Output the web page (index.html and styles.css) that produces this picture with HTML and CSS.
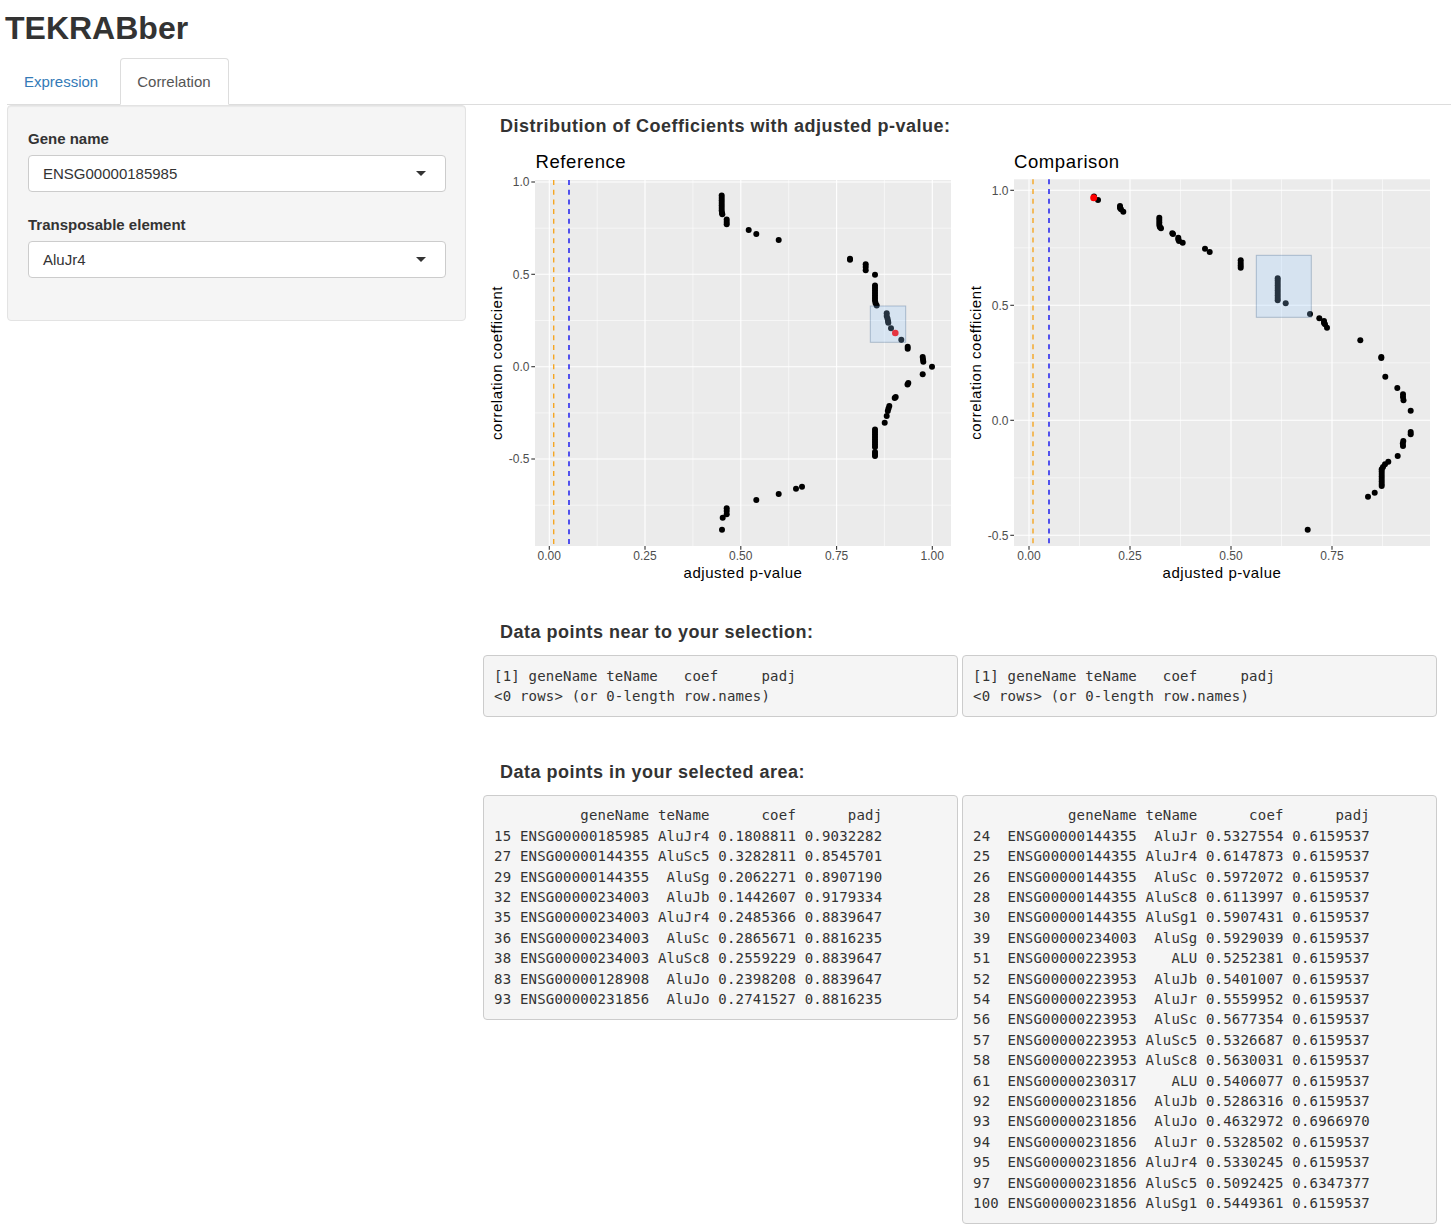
FILE: index.html
```html
<!DOCTYPE html>
<html>
<head>
<meta charset="utf-8">
<title>TEKRABber</title>
<link rel="stylesheet" href="styles.css">
</head>
<body>
<div class="app">
  <h2 class="app-title">TEKRABber</h2>
  <ul class="tabs">
    <li class="tab"><a>Expression</a></li>
    <li class="tab active"><a>Correlation</a></li>
  </ul>
  <div class="layout">
    <aside class="sidebar">
      <div class="well">
        <div class="form-group">
          <label class="control-label">Gene name</label>
          <div class="select"><span>ENSG00000185985</span><i class="caret"></i></div>
        </div>
        <div class="form-group">
          <label class="control-label">Transposable element</label>
          <div class="select"><span>AluJr4</span><i class="caret"></i></div>
        </div>
      </div>
    </aside>
    <main class="main">
      <h4 class="section-title first">Distribution of Coefficients with adjusted p-value:</h4>
      <div class="pair">
        <svg class="plot" width="475" height="445" viewBox="483 145 475 445" xmlns="http://www.w3.org/2000/svg">
          <rect x="535" y="179" width="416" height="366" fill="#EBEBEB"/>
          <g stroke="#FFFFFF" stroke-width="0.55">
            <line x1="597.2" y1="179" x2="597.2" y2="545"/><line x1="692.9" y1="179" x2="692.9" y2="545"/>
            <line x1="788.7" y1="179" x2="788.7" y2="545"/><line x1="884.4" y1="179" x2="884.4" y2="545"/>
            <line x1="535" y1="227.2" x2="951" y2="227.2"/><line x1="535" y1="319.5" x2="951" y2="319.5"/>
            <line x1="535" y1="411.9" x2="951" y2="411.9"/><line x1="535" y1="504.2" x2="951" y2="504.2"/>
          </g>
          <g stroke="#FFFFFF" stroke-width="1.1">
            <line x1="549.3" y1="179" x2="549.3" y2="545"/><line x1="645" y1="179" x2="645" y2="545"/>
            <line x1="740.8" y1="179" x2="740.8" y2="545"/><line x1="836.6" y1="179" x2="836.6" y2="545"/>
            <line x1="932.3" y1="179" x2="932.3" y2="545"/>
            <line x1="535" y1="181" x2="951" y2="181"/><line x1="535" y1="273.3" x2="951" y2="273.3"/>
            <line x1="535" y1="365.7" x2="951" y2="365.7"/><line x1="535" y1="458" x2="951" y2="458"/>
          </g>
          <line x1="553.7" y1="179" x2="553.7" y2="545" stroke="#F5A623" stroke-width="1.4" stroke-dasharray="5 4.7"/>
          <line x1="569" y1="179" x2="569" y2="545" stroke="#1010F0" stroke-width="1.4" stroke-dasharray="5 4.7"/>
          <g fill="#000000">
            <circle cx="721.7" cy="194.5" r="3"/><circle cx="721.7" cy="197" r="3"/><circle cx="721.7" cy="199.5" r="3"/>
            <circle cx="721.7" cy="202" r="3"/><circle cx="721.7" cy="204.5" r="3"/><circle cx="721.7" cy="207" r="3"/>
            <circle cx="721.7" cy="209.5" r="3"/><circle cx="722" cy="212" r="3"/><circle cx="722.3" cy="213.3" r="3"/>
            <circle cx="726.7" cy="218.5" r="3"/><circle cx="726.7" cy="221" r="3"/><circle cx="726.7" cy="223.3" r="3"/>
            <circle cx="748.7" cy="229" r="3"/><circle cx="756.3" cy="233" r="3"/><circle cx="778.7" cy="239" r="3"/>
            <circle cx="850" cy="257.7" r="3"/><circle cx="850" cy="258.7" r="3"/>
            <circle cx="865.7" cy="263.3" r="3"/><circle cx="865.7" cy="266" r="3"/><circle cx="865.7" cy="269.3" r="3"/>
            <circle cx="875" cy="273.7" r="3"/>
            <circle cx="875" cy="284.5" r="3"/><circle cx="875" cy="287" r="3"/><circle cx="875" cy="289.5" r="3"/>
            <circle cx="875" cy="292" r="3"/><circle cx="875" cy="294.5" r="3"/><circle cx="875" cy="297" r="3"/>
            <circle cx="875" cy="299.5" r="3"/><circle cx="875.5" cy="302" r="3"/><circle cx="876.7" cy="304.5" r="3"/>
            <circle cx="886.7" cy="312.3" r="3"/><circle cx="886.7" cy="315" r="3"/><circle cx="887.5" cy="317.5" r="3"/>
            <circle cx="888" cy="320" r="3"/><circle cx="888.3" cy="321.7" r="3"/><circle cx="891" cy="327.3" r="3"/>
            <circle cx="901.3" cy="338.7" r="3"/>
            <circle cx="907.7" cy="345.7" r="3"/><circle cx="907.7" cy="347.7" r="3"/>
            <circle cx="922.7" cy="356" r="3"/><circle cx="923" cy="358.5" r="3"/><circle cx="923.3" cy="360.7" r="3"/>
            <circle cx="932" cy="365.7" r="3"/><circle cx="922.7" cy="373.3" r="3"/>
            <circle cx="908.3" cy="382" r="3"/><circle cx="907.5" cy="383.5" r="3"/>
            <circle cx="895.7" cy="396" r="3"/><circle cx="894.7" cy="397" r="3"/>
            <circle cx="889.3" cy="405" r="3"/><circle cx="888.5" cy="407.5" r="3"/><circle cx="887.8" cy="410" r="3"/>
            <circle cx="886.7" cy="415" r="3"/><circle cx="884.7" cy="421.7" r="3"/>
            <circle cx="875" cy="428.5" r="3"/><circle cx="875" cy="431" r="3"/><circle cx="875" cy="433.5" r="3"/>
            <circle cx="875" cy="436" r="3"/><circle cx="875" cy="438.5" r="3"/><circle cx="875" cy="441" r="3"/>
            <circle cx="875" cy="443.5" r="3"/><circle cx="875" cy="446" r="3"/><circle cx="875" cy="451" r="3"/>
            <circle cx="875" cy="453" r="3"/><circle cx="875" cy="455" r="3"/>
            <circle cx="802" cy="485.7" r="3"/><circle cx="796" cy="487.7" r="3"/><circle cx="778.7" cy="493" r="3"/>
            <circle cx="756.3" cy="499" r="3"/>
            <circle cx="726.7" cy="507.3" r="3"/><circle cx="726.7" cy="510" r="3"/><circle cx="726.7" cy="513.3" r="3"/>
            <circle cx="722.7" cy="516.7" r="3"/><circle cx="722" cy="528.7" r="3"/>
          </g>
          <circle cx="895.3" cy="332" r="3.3" fill="#FF0000"/>
          <rect x="870.3" y="305" width="35.4" height="36.3" fill="rgba(153,204,255,0.25)" stroke="rgba(0,51,102,0.25)" stroke-width="1"/>
          <g stroke="#333333" stroke-width="1.1">
            <line x1="531.3" y1="181" x2="535" y2="181"/><line x1="531.3" y1="273.3" x2="535" y2="273.3"/>
            <line x1="531.3" y1="365.7" x2="535" y2="365.7"/><line x1="531.3" y1="458" x2="535" y2="458"/>
            <line x1="549.3" y1="545" x2="549.3" y2="548.7"/><line x1="645" y1="545" x2="645" y2="548.7"/>
            <line x1="740.8" y1="545" x2="740.8" y2="548.7"/><line x1="836.6" y1="545" x2="836.6" y2="548.7"/>
            <line x1="932.3" y1="545" x2="932.3" y2="548.7"/>
          </g>
          <g class="tick-label" text-anchor="end">
            <text x="529.5" y="185.3">1.0</text><text x="529.5" y="277.6">0.5</text>
            <text x="529.5" y="370">0.0</text><text x="529.5" y="462.3">-0.5</text>
          </g>
          <g class="tick-label" text-anchor="middle">
            <text x="549.3" y="559">0.00</text><text x="645" y="559">0.25</text><text x="740.8" y="559">0.50</text>
            <text x="836.6" y="559">0.75</text><text x="932.3" y="559">1.00</text>
          </g>
          <text class="axis-title" x="743" y="577" text-anchor="middle">adjusted p-value</text>
          <text class="axis-title" transform="translate(501.5,362) rotate(-90)" text-anchor="middle">correlation coefficient</text>
          <text class="plot-title" x="535.5" y="167.2">Reference</text>
        </svg>
        <svg class="plot" width="475" height="445" viewBox="962 145 475 445" xmlns="http://www.w3.org/2000/svg">
          <rect x="1014" y="178.3" width="416" height="366.7" fill="#EBEBEB"/>
          <g stroke="#FFFFFF" stroke-width="0.55">
            <line x1="1079.5" y1="178.3" x2="1079.5" y2="545"/><line x1="1180.5" y1="178.3" x2="1180.5" y2="545"/>
            <line x1="1281.5" y1="178.3" x2="1281.5" y2="545"/><line x1="1382.5" y1="178.3" x2="1382.5" y2="545"/>
            <line x1="1014" y1="246.8" x2="1430" y2="246.8"/><line x1="1014" y1="361.8" x2="1430" y2="361.8"/>
            <line x1="1014" y1="476.8" x2="1430" y2="476.8"/>
          </g>
          <g stroke="#FFFFFF" stroke-width="1.1">
            <line x1="1029" y1="178.3" x2="1029" y2="545"/><line x1="1130" y1="178.3" x2="1130" y2="545"/>
            <line x1="1231" y1="178.3" x2="1231" y2="545"/><line x1="1332" y1="178.3" x2="1332" y2="545"/>
            <line x1="1014" y1="189.3" x2="1430" y2="189.3"/><line x1="1014" y1="304.3" x2="1430" y2="304.3"/>
            <line x1="1014" y1="419.3" x2="1430" y2="419.3"/><line x1="1014" y1="534.3" x2="1430" y2="534.3"/>
          </g>
          <line x1="1033" y1="178.3" x2="1033" y2="545" stroke="#F5A623" stroke-width="1.4" stroke-dasharray="5 4.7"/>
          <line x1="1049" y1="178.3" x2="1049" y2="545" stroke="#1010F0" stroke-width="1.4" stroke-dasharray="5 4.7"/>
          <g fill="#000000">
            <circle cx="1094" cy="195.5" r="3"/><circle cx="1098" cy="199" r="3"/>
            <circle cx="1120" cy="205" r="3"/><circle cx="1120" cy="207" r="3"/><circle cx="1121" cy="208.3" r="3"/>
            <circle cx="1123.3" cy="210.7" r="3"/>
            <circle cx="1159.3" cy="216.7" r="3"/><circle cx="1159.3" cy="219" r="3"/><circle cx="1159.3" cy="221.5" r="3"/>
            <circle cx="1159.3" cy="224" r="3"/><circle cx="1159.8" cy="226" r="3"/><circle cx="1161" cy="227.3" r="3"/>
            <circle cx="1172.3" cy="232.3" r="3"/><circle cx="1173" cy="233" r="3"/>
            <circle cx="1178.3" cy="236.7" r="3"/><circle cx="1178.3" cy="238.5" r="3"/><circle cx="1179" cy="240" r="3"/>
            <circle cx="1182.7" cy="241.7" r="3"/>
            <circle cx="1205" cy="247.7" r="3"/><circle cx="1209.7" cy="251" r="3"/>
            <circle cx="1240.7" cy="259.3" r="3"/><circle cx="1240.7" cy="262" r="3"/><circle cx="1240.7" cy="264.5" r="3"/>
            <circle cx="1240.7" cy="266.7" r="3"/>
            <circle cx="1277.7" cy="277.3" r="3"/><circle cx="1277.7" cy="279.5" r="3"/><circle cx="1277.7" cy="282" r="3"/>
            <circle cx="1277.7" cy="284.5" r="3"/><circle cx="1277.7" cy="287" r="3"/><circle cx="1277.7" cy="289.5" r="3"/>
            <circle cx="1277.7" cy="292" r="3"/><circle cx="1277.7" cy="294.5" r="3"/><circle cx="1277.7" cy="297" r="3"/>
            <circle cx="1277.7" cy="299.3" r="3"/><circle cx="1285.7" cy="302.3" r="3"/>
            <circle cx="1310" cy="313" r="3"/>
            <circle cx="1319.3" cy="317.3" r="3"/><circle cx="1324" cy="320" r="3"/><circle cx="1324" cy="322" r="3"/>
            <circle cx="1325" cy="323.3" r="3"/><circle cx="1327" cy="326.7" r="3"/>
            <circle cx="1360.3" cy="339.3" r="3"/>
            <circle cx="1381.3" cy="356" r="3"/><circle cx="1381.3" cy="357" r="3"/>
            <circle cx="1385.3" cy="375.7" r="3"/><circle cx="1397.3" cy="387" r="3"/>
            <circle cx="1403" cy="393.3" r="3"/><circle cx="1403" cy="396" r="3"/><circle cx="1403.5" cy="399.3" r="3"/>
            <circle cx="1410.7" cy="409.7" r="3"/>
            <circle cx="1410.7" cy="431" r="3"/><circle cx="1410.7" cy="433.3" r="3"/>
            <circle cx="1403.3" cy="440" r="3"/><circle cx="1402.8" cy="442.5" r="3"/><circle cx="1403" cy="445" r="3"/>
            <circle cx="1397.7" cy="455" r="3"/>
            <circle cx="1388.3" cy="460.7" r="3"/><circle cx="1385" cy="463.3" r="3"/><circle cx="1383" cy="466" r="3"/>
            <circle cx="1381.7" cy="468.3" r="3"/><circle cx="1381.7" cy="470.5" r="3"/><circle cx="1381.7" cy="473" r="3"/>
            <circle cx="1381.7" cy="475.5" r="3"/><circle cx="1381.7" cy="478" r="3"/><circle cx="1381.7" cy="480.5" r="3"/>
            <circle cx="1381.7" cy="483" r="3"/><circle cx="1381.7" cy="485" r="3"/>
            <circle cx="1374.7" cy="491.7" r="3"/><circle cx="1368" cy="495.7" r="3"/>
            <circle cx="1307.7" cy="528.7" r="3"/>
          </g>
          <circle cx="1093.7" cy="196.7" r="3.5" fill="#FF0000"/>
          <rect x="1256.3" y="254.3" width="55" height="62" fill="rgba(153,204,255,0.25)" stroke="rgba(0,51,102,0.25)" stroke-width="1"/>
          <g stroke="#333333" stroke-width="1.1">
            <line x1="1010.3" y1="189.3" x2="1014" y2="189.3"/><line x1="1010.3" y1="304.3" x2="1014" y2="304.3"/>
            <line x1="1010.3" y1="419.3" x2="1014" y2="419.3"/><line x1="1010.3" y1="534.3" x2="1014" y2="534.3"/>
            <line x1="1029" y1="545" x2="1029" y2="548.7"/><line x1="1130" y1="545" x2="1130" y2="548.7"/>
            <line x1="1231" y1="545" x2="1231" y2="548.7"/><line x1="1332" y1="545" x2="1332" y2="548.7"/>
          </g>
          <g class="tick-label" text-anchor="end">
            <text x="1008.5" y="193.6">1.0</text><text x="1008.5" y="308.6">0.5</text>
            <text x="1008.5" y="423.6">0.0</text><text x="1008.5" y="538.6">-0.5</text>
          </g>
          <g class="tick-label" text-anchor="middle">
            <text x="1029" y="559">0.00</text><text x="1130" y="559">0.25</text>
            <text x="1231" y="559">0.50</text><text x="1332" y="559">0.75</text>
          </g>
          <text class="axis-title" x="1222" y="577" text-anchor="middle">adjusted p-value</text>
          <text class="axis-title" transform="translate(981,361.7) rotate(-90)" text-anchor="middle">correlation coefficient</text>
          <text class="plot-title" x="1014" y="167">Comparison</text>
        </svg>
      </div>

      <h4 class="section-title near">Data points near to your selection:</h4>
      <div class="pair">
        <pre class="output">[1] geneName teName   coef     padj
&lt;0 rows&gt; (or 0-length row.names)</pre>
        <pre class="output">[1] geneName teName   coef     padj
&lt;0 rows&gt; (or 0-length row.names)</pre>
      </div>

      <h4 class="section-title area">Data points in your selected area:</h4>
      <div class="pair">
        <pre class="output">          geneName teName      coef      padj
15 ENSG00000185985 AluJr4 0.1808811 0.9032282
27 ENSG00000144355 AluSc5 0.3282811 0.8545701
29 ENSG00000144355  AluSg 0.2062271 0.8907190
32 ENSG00000234003  AluJb 0.1442607 0.9179334
35 ENSG00000234003 AluJr4 0.2485366 0.8839647
36 ENSG00000234003  AluSc 0.2865671 0.8816235
38 ENSG00000234003 AluSc8 0.2559229 0.8839647
83 ENSG00000128908  AluJo 0.2398208 0.8839647
93 ENSG00000231856  AluJo 0.2741527 0.8816235</pre>
        <pre class="output">           geneName teName      coef      padj
24  ENSG00000144355  AluJr 0.5327554 0.6159537
25  ENSG00000144355 AluJr4 0.6147873 0.6159537
26  ENSG00000144355  AluSc 0.5972072 0.6159537
28  ENSG00000144355 AluSc8 0.6113997 0.6159537
30  ENSG00000144355 AluSg1 0.5907431 0.6159537
39  ENSG00000234003  AluSg 0.5929039 0.6159537
51  ENSG00000223953    ALU 0.5252381 0.6159537
52  ENSG00000223953  AluJb 0.5401007 0.6159537
54  ENSG00000223953  AluJr 0.5559952 0.6159537
56  ENSG00000223953  AluSc 0.5677354 0.6159537
57  ENSG00000223953 AluSc5 0.5326687 0.6159537
58  ENSG00000223953 AluSc8 0.5630031 0.6159537
61  ENSG00000230317    ALU 0.5406077 0.6159537
92  ENSG00000231856  AluJb 0.5286316 0.6159537
93  ENSG00000231856  AluJo 0.4632972 0.6966970
94  ENSG00000231856  AluJr 0.5328502 0.6159537
95  ENSG00000231856 AluJr4 0.5330245 0.6159537
97  ENSG00000231856 AluSc5 0.5092425 0.6347377
100 ENSG00000231856 AluSg1 0.5449361 0.6159537</pre>
      </div>
    </main>
  </div>
</div>
</body>
</html>
```

FILE: styles.css
```css
* { box-sizing: border-box; }

html, body {
  margin: 0;
  padding: 0;
  background: #ffffff;
}

body {
  font-family: "Liberation Sans", Arial, "Helvetica Neue", sans-serif;
  font-size: 15px;
  color: #333333;
}

.app {
  padding-left: 7px;
}

.app-title {
  margin: 0 0 12px -2px;
  padding-top: 11px;
  font-size: 32px;
  line-height: 35px;
  font-weight: 700;
  color: #333333;
}

.tabs {
  display: flex;
  list-style: none;
  margin: 0;
  padding: 0;
  border-bottom: 1px solid #dddddd;
}

.tab a {
  display: block;
  padding: 12px 17px 12px 16px;
  line-height: 21px;
  font-size: 15px;
  border: 1px solid transparent;
  border-radius: 4px 4px 0 0;
  margin-right: 4px;
  margin-bottom: -1px;
  color: #337ab7;
}

.tab.active a {
  background: #ffffff;
  color: #555555;
  border-color: #dddddd #dddddd transparent;
}

.layout {
  display: flex;
  align-items: flex-start;
}

.sidebar {
  width: 459px;
  flex: none;
}

.well {
  height: 216px;
  padding: 22px 19px 0 20px;
  background: #f5f5f5;
  border: 1px solid #e3e3e3;
  border-radius: 4px;
  box-shadow: inset 0 1px 1px rgba(0, 0, 0, 0.05);
}

.form-group {
  margin-bottom: 22px;
}

.control-label {
  display: block;
  font-weight: 700;
  font-size: 15px;
  line-height: 21px;
  margin-bottom: 6px;
  color: #333333;
}

.select {
  position: relative;
  display: flex;
  align-items: center;
  height: 37px;
  padding-left: 14px;
  background: #ffffff;
  border: 1px solid #cccccc;
  border-radius: 4px;
  font-size: 15px;
  color: #333333;
}

.caret {
  position: absolute;
  right: 19px;
  top: 50%;
  margin-top: -3px;
  width: 0;
  height: 0;
  border-top: 5px solid #333333;
  border-left: 5.5px solid transparent;
  border-right: 5.5px solid transparent;
}

.main {
  margin-left: 17px;
  width: 954px;
  flex: none;
}

.section-title {
  font-size: 18px;
  font-weight: 700;
  letter-spacing: 0.5px;
  line-height: 20px;
  margin: 0 0 13px 17px;
  color: #333333;
}

.section-title.first {
  margin-top: 11px;
  margin-bottom: 10px;
}

.section-title.near {
  margin-top: 31px;
}

.section-title.area {
  margin-top: 45px;
}

.pair {
  display: grid;
  grid-template-columns: 475px 475px;
  column-gap: 4px;
  align-items: start;
}

.plot {
  display: block;
}

.tick-label {
  font-family: "Liberation Sans", Arial, sans-serif;
  font-size: 12px;
  fill: #4d4d4d;
}

.axis-title {
  font-family: "Liberation Sans", Arial, sans-serif;
  font-size: 15px;
  letter-spacing: 0.55px;
  fill: #000000;
}

.plot-title {
  font-family: "Liberation Sans", Arial, sans-serif;
  font-size: 18.5px;
  letter-spacing: 0.6px;
  fill: #000000;
}

.output {
  margin: 0;
  padding: 9.5px 9.5px 9.5px 10px;
  background: #f5f5f5;
  border: 1px solid #cccccc;
  border-radius: 4px;
  font-family: "DejaVu Sans Mono", "Liberation Mono", monospace;
  font-size: 14px;
  letter-spacing: 0.2px;
  line-height: 20.4px;
  color: #333333;
  white-space: pre;
  overflow: hidden;
}
```
